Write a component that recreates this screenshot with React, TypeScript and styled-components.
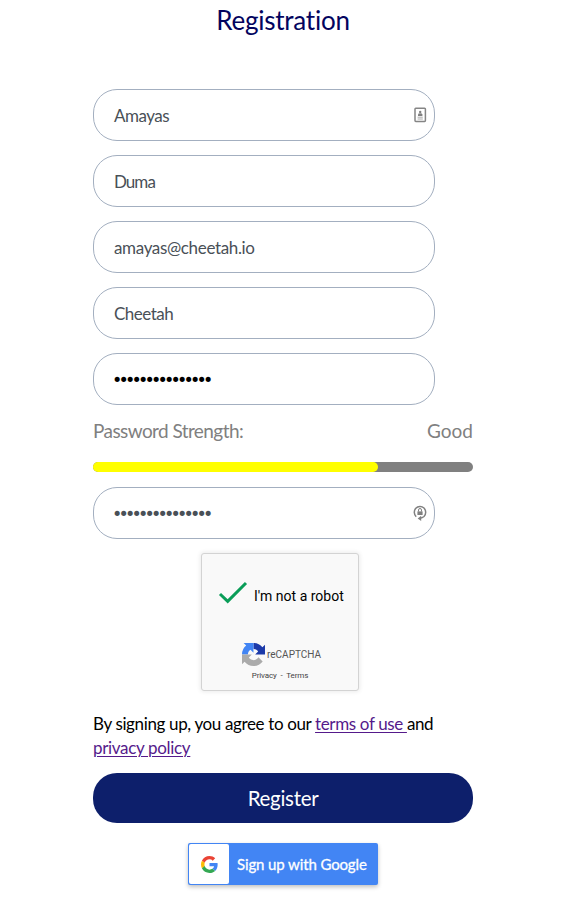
import React from "react";
import styled, { createGlobalStyle } from "styled-components";

const GlobalStyle = createGlobalStyle`
  * { box-sizing: border-box; }
  body { margin: 0; background: #fff; font-family: Lato, sans-serif; }
`;

const Page = styled.main`
  width: 380px;
  margin-left: 93px;
  height: 903px;
  display: flex;
  flex-direction: column;
`;

const Title = styled.h1`
  margin: 0 0 49px;
  height: 40px;
  line-height: 40px;
  font-size: 26px;
  font-weight: 400;
  letter-spacing: -0.25px;
  text-align: center;
  color: #03045e;
`;

const Fields = styled.div`
  display: flex;
  flex-direction: column;
  gap: 14px;
`;

const Field = styled.div`
  width: 342px;
  height: 52px;
  padding: 0 7px 0 20px;
  border: 1px solid #a3afc0;
  border-radius: 24px;
  display: flex;
  align-items: center;
  justify-content: space-between;
`;

const Value = styled.span<{ $spacing: number }>`
  font-size: 17px;
  line-height: 24px;
  padding-top: 2px;
  color: #495057;
  letter-spacing: ${(p) => p.$spacing}px;
`;

const Dots = styled.span<{ $color: string }>`
  font: 17.5px/24px "DejaVu Sans", sans-serif;
  letter-spacing: -3.82px;
  margin: 1px 0 0 -2px;
  color: ${(p) => p.$color};
`;

const Strength = styled.div`
  display: flex;
  justify-content: space-between;
  margin-top: 11px;
  height: 29px;
  line-height: 29px;
  font-size: 19px;
  color: #808080;
`;

const Label = styled.span<{ $spacing: number }>`
  letter-spacing: ${(p) => p.$spacing}px;
`;

const Track = styled.div`
  height: 10px;
  margin: 17px 0 15px;
  border-radius: 5px;
  background: #808080;
`;

const Fill = styled.div`
  width: 75%;
  height: 10px;
  border-radius: 5px;
  background: #ff0;
`;

const Captcha = styled.div`
  width: 158px;
  height: 138px;
  margin: 14px 0 0 108px;
  border: 1px solid #d3d3d3;
  border-radius: 3px;
  background: #f9f9f9;
  box-shadow: 0 0 4px 1px rgba(0, 0, 0, 0.08);
  font-family: Roboto, sans-serif;
  display: flex;
  flex-direction: column;
`;

const CheckRow = styled.div`
  height: 84px;
  padding: 0 0 0 16px;
  display: flex;
  align-items: center;
  gap: 6px;
  font-size: 14px;
  color: #000;
  svg { margin-top: -6px; }
`;

const Brand = styled.div`
  height: 32px;
  padding-left: 40px;
  display: flex;
  align-items: center;
  gap: 2px;
  font-size: 10px;
  color: #555;
`;

const Legal = styled.div`
  text-align: center;
  font-size: 8px;
  line-height: 11px;
  letter-spacing: -0.12px;
  color: #444;
`;

const Terms = styled.p`
  margin: 21px 0 13px;
  font-size: 17px;
  line-height: 24px;
  color: #000;
  white-space: nowrap;
`;

const Link = styled.a`
  color: #551a8b;
  text-decoration: underline;
  text-decoration-thickness: 1px;
  text-underline-offset: 2px;
`;

const Register = styled.button`
  width: 380px;
  height: 50px;
  flex: none;
  border: 0;
  border-radius: 24px;
  background: #0d1f6b;
  color: #fff;
  font: 20.5px/50px Lato, sans-serif;
  letter-spacing: -0.3px;
  padding: 0;
`;

const Google = styled.button`
  width: 190px;
  height: 42px;
  margin: 20px 0 0 95px;
  padding: 1px;
  border: 0;
  border-radius: 2px;
  background: #4285f4;
  box-shadow: 0 2px 4px rgba(0, 0, 0, 0.25);
  color: #fff;
  display: flex;
  align-items: center;
  gap: 8px;
  font: 400 15px/40px Lato, sans-serif;
  letter-spacing: -0.12px;
  -webkit-text-stroke: 0.3px #fff;
  white-space: nowrap;
`;

const LogoTile = styled.span`
  width: 40px;
  height: 40px;
  border-radius: 2px;
  background: #fff;
  display: flex;
  align-items: center;
  justify-content: center;
`;

const ContactIcon = () => (
  <svg width="14" height="16" viewBox="0 0 14 16">
    <rect x="2" y="1.2" width="10.4" height="13.2" rx="0.8" fill="#fff" stroke="#858585" strokeWidth="1.5" />
    <circle cx="7.2" cy="4.9" r="1.2" fill="#808080" />
    <path d="M5 9V7.6Q5 6.2 7.2 6.2T9.4 7.6V9Z" fill="#808080" />
    <path d="M4.6 10.2h5.2M4.6 12h5.2" stroke="#aaa" strokeWidth="1" />
  </svg>
);

const KeyIcon = () => (
  <svg width="14" height="18" viewBox="0 0 14 18">
    <path d="M3.2 12.7A5.7 5.9 0 1 1 11 12.5Q9.4 14 7 14.2" fill="none" stroke="#808080" strokeWidth="1.5" />
    <path d="M8.2 11.8V17L4.7 14.4Z" fill="#808080" />
    <rect x="4.4" y="7.4" width="5.2" height="3.6" fill="#808080" />
    <path d="M5.5 7.6V6a1.5 1.5 0 0 1 3 0V7.6" fill="none" stroke="#808080" />
  </svg>
);

const CheckIcon = () => (
  <svg width="30" height="24" viewBox="0 0 30 24">
    <path d="M2 13L9.7 20.3L28 2" fill="none" stroke="#0a9d58" strokeWidth="3" />
  </svg>
);

const RecaptchaIcon = () => (
  <svg width="23" height="23" viewBox="0 0 64 64">
    <path fill="#1c3aa9" d="M64 31.96c0-.46-.01-.92-.03-1.37V4.55l-7.2 7.2C50.88 4.54 41.93 0 31.92 0V16.34c.49 0 .86.06 1.14.16 4.99.4 9.31 3.15 11.86 7.15l-8.35 8.35L64 31.96" />
    <path fill="#4285f4" d="M31.86 0H4.45l7.2 7.2A32 32 0 0 0 0 32.05H16.34c0-.49.06-.86.16-1.14.4-4.99 3.15-9.31 7.15-11.86L31.9 27.4Z" />
    <path fill="#ababab" d="M0 32.04v27.41l7.2-7.2A32 32 0 0 0 32.05 64c10.42 0 19.68-4.98 25.52-12.7l-11.8-11.92a15.6 15.6 0 0 1-4.78 5.36c-2.06 1.6-4.98 2.92-9 2.92-.49 0-.86-.06-1.14-.16-4.99-.4-9.31-3.15-11.86-7.15L27.34 32Z" />
  </svg>
);

const GoogleIcon = () => (
  <svg width="17" height="17" viewBox="0 0 48 48">
    <path fill="#ea4335" d="M24 9.5c3.54 0 6.71 1.22 9.21 3.6l6.85-6.85C35.9 2.38 30.47 0 24 0 14.62 0 6.51 5.38 2.56 13.22l7.98 6.19C12.43 13.72 17.74 9.5 24 9.5z" />
    <path fill="#4285f4" d="M46.98 24.55c0-1.57-.15-3.09-.38-4.55H24v9.02h12.94c-.58 2.96-2.26 5.48-4.78 7.18l7.73 6c4.51-4.18 7.09-10.36 7.09-17.65z" />
    <path fill="#fbbc05" d="M10.53 28.59c-.48-1.45-.76-2.99-.76-4.59s.27-3.14.76-4.59l-7.98-6.19C.92 16.46 0 20.12 0 24c0 3.88.92 7.54 2.56 10.78l7.97-6.19z" />
    <path fill="#34a853" d="M24 48c6.48 0 11.93-2.13 15.89-5.81l-7.73-6c-2.15 1.45-4.92 2.3-8.16 2.3-6.26 0-11.57-4.22-13.47-9.91l-7.98 6.19C6.51 42.62 14.62 48 24 48z" />
  </svg>
);

const BULLETS = "•".repeat(15);

export default function App() {
  return (
    <>
      <GlobalStyle />
      <Page>
        <Title>Registration</Title>
        <Fields>
          <Field><Value $spacing={-0.5}>Amayas</Value><ContactIcon /></Field>
          <Field><Value $spacing={-0.95}>Duma</Value></Field>
          <Field><Value $spacing={-0.35}>amayas@cheetah.io</Value></Field>
          <Field><Value $spacing={-0.5}>Cheetah</Value></Field>
          <Field><Dots $color="#000">{BULLETS}</Dots></Field>
        </Fields>
        <Strength>
          <Label $spacing={-0.58}>Password Strength:</Label>
          <Label $spacing={0}>Good</Label>
        </Strength>
        <Track><Fill /></Track>
        <Field><Dots $color="#495057">{BULLETS}</Dots><KeyIcon /></Field>
        <Captcha>
          <CheckRow><CheckIcon />I'm not a robot</CheckRow>
          <Brand><RecaptchaIcon />reCAPTCHA</Brand>
          <Legal>Privacy&nbsp; - &nbsp;Terms</Legal>
        </Captcha>
        <Terms>
          <Label $spacing={-0.36}>By signing up, you agree to our <Link>terms of use </Link>and</Label>
          <br />
          <Label $spacing={-0.32}><Link>privacy policy</Link></Label>
        </Terms>
        <Register>Register</Register>
        <Google><LogoTile><GoogleIcon /></LogoTile>Sign up with Google</Google>
      </Page>
    </>
  );
}
